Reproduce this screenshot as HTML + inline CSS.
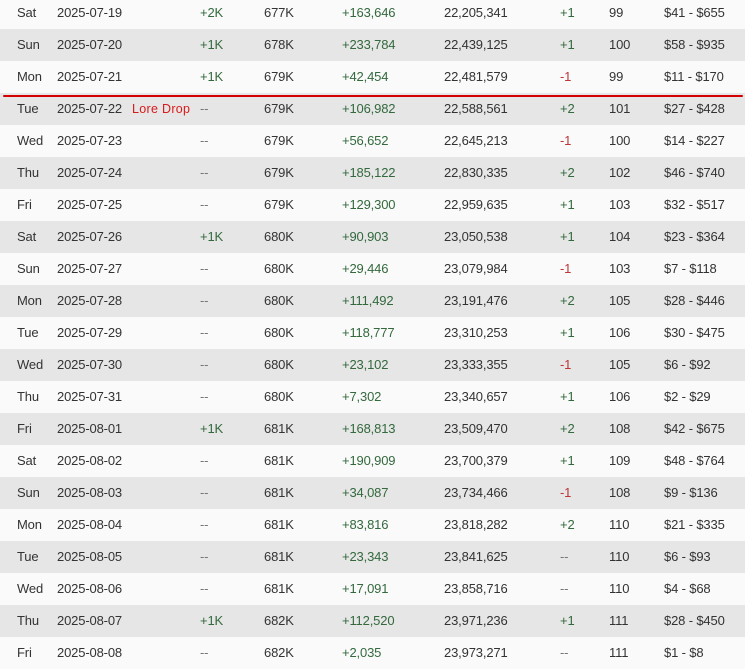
<!DOCTYPE html>
<html><head><style>
body{margin:0;width:745px;height:666px;overflow:hidden;background:#fafafa;font-family:"Liberation Sans",sans-serif;font-size:13px;color:#333;position:relative}
.r{position:absolute;left:0;width:745px;height:32px;line-height:32px}
.r.g{background:#e6e6e6}
.r span{position:absolute;top:0;white-space:nowrap;letter-spacing:-.15px}
.gr{color:#33693d}.rd{color:#c03535}.mu{color:#777}
.lore{color:#d81b1b;font-size:12.5px;letter-spacing:.3px!important}
.line{position:absolute;left:3px;width:740px;top:95px;height:2px;background:#d40000;border-radius:1px}
</style></head><body>
<div id="t"></div>
<div class="line"></div>
<script>
const d=[
["Sat","2025-07-19","+2K","677K","+163,646","22,205,341","+1","99","$41 - $655"],
["Sun","2025-07-20","+1K","678K","+233,784","22,439,125","+1","100","$58 - $935"],
["Mon","2025-07-21","+1K","679K","+42,454","22,481,579","-1","99","$11 - $170"],
["Tue","2025-07-22","--","679K","+106,982","22,588,561","+2","101","$27 - $428"],
["Wed","2025-07-23","--","679K","+56,652","22,645,213","-1","100","$14 - $227"],
["Thu","2025-07-24","--","679K","+185,122","22,830,335","+2","102","$46 - $740"],
["Fri","2025-07-25","--","679K","+129,300","22,959,635","+1","103","$32 - $517"],
["Sat","2025-07-26","+1K","680K","+90,903","23,050,538","+1","104","$23 - $364"],
["Sun","2025-07-27","--","680K","+29,446","23,079,984","-1","103","$7 - $118"],
["Mon","2025-07-28","--","680K","+111,492","23,191,476","+2","105","$28 - $446"],
["Tue","2025-07-29","--","680K","+118,777","23,310,253","+1","106","$30 - $475"],
["Wed","2025-07-30","--","680K","+23,102","23,333,355","-1","105","$6 - $92"],
["Thu","2025-07-31","--","680K","+7,302","23,340,657","+1","106","$2 - $29"],
["Fri","2025-08-01","+1K","681K","+168,813","23,509,470","+2","108","$42 - $675"],
["Sat","2025-08-02","--","681K","+190,909","23,700,379","+1","109","$48 - $764"],
["Sun","2025-08-03","--","681K","+34,087","23,734,466","-1","108","$9 - $136"],
["Mon","2025-08-04","--","681K","+83,816","23,818,282","+2","110","$21 - $335"],
["Tue","2025-08-05","--","681K","+23,343","23,841,625","--","110","$6 - $93"],
["Wed","2025-08-06","--","681K","+17,091","23,858,716","--","110","$4 - $68"],
["Thu","2025-08-07","+1K","682K","+112,520","23,971,236","+1","111","$28 - $450"],
["Fri","2025-08-08","--","682K","+2,035","23,973,271","--","111","$1 - $8"]];
const xs=[17,57,200,264,342,444,560,609,664];
let h="";
d.forEach((r,i)=>{
h+=`<div class="r${i%2?' g':''}" style="top:${-3+32*i}px">`;
r.forEach((c,j)=>{let cl="";
if(j==2||j==6)cl=c=="--"?"mu":c.startsWith("+")?"gr":"rd";
if(j==4)cl="gr";
h+=`<span class="${cl}" style="left:${xs[j]}px">${c}</span>`;});
if(i==3)h+=`<span class="lore" style="left:132px">Lore Drop</span>`;
h+="</div>";});
document.getElementById("t").innerHTML=h;
</script>
</body></html>
